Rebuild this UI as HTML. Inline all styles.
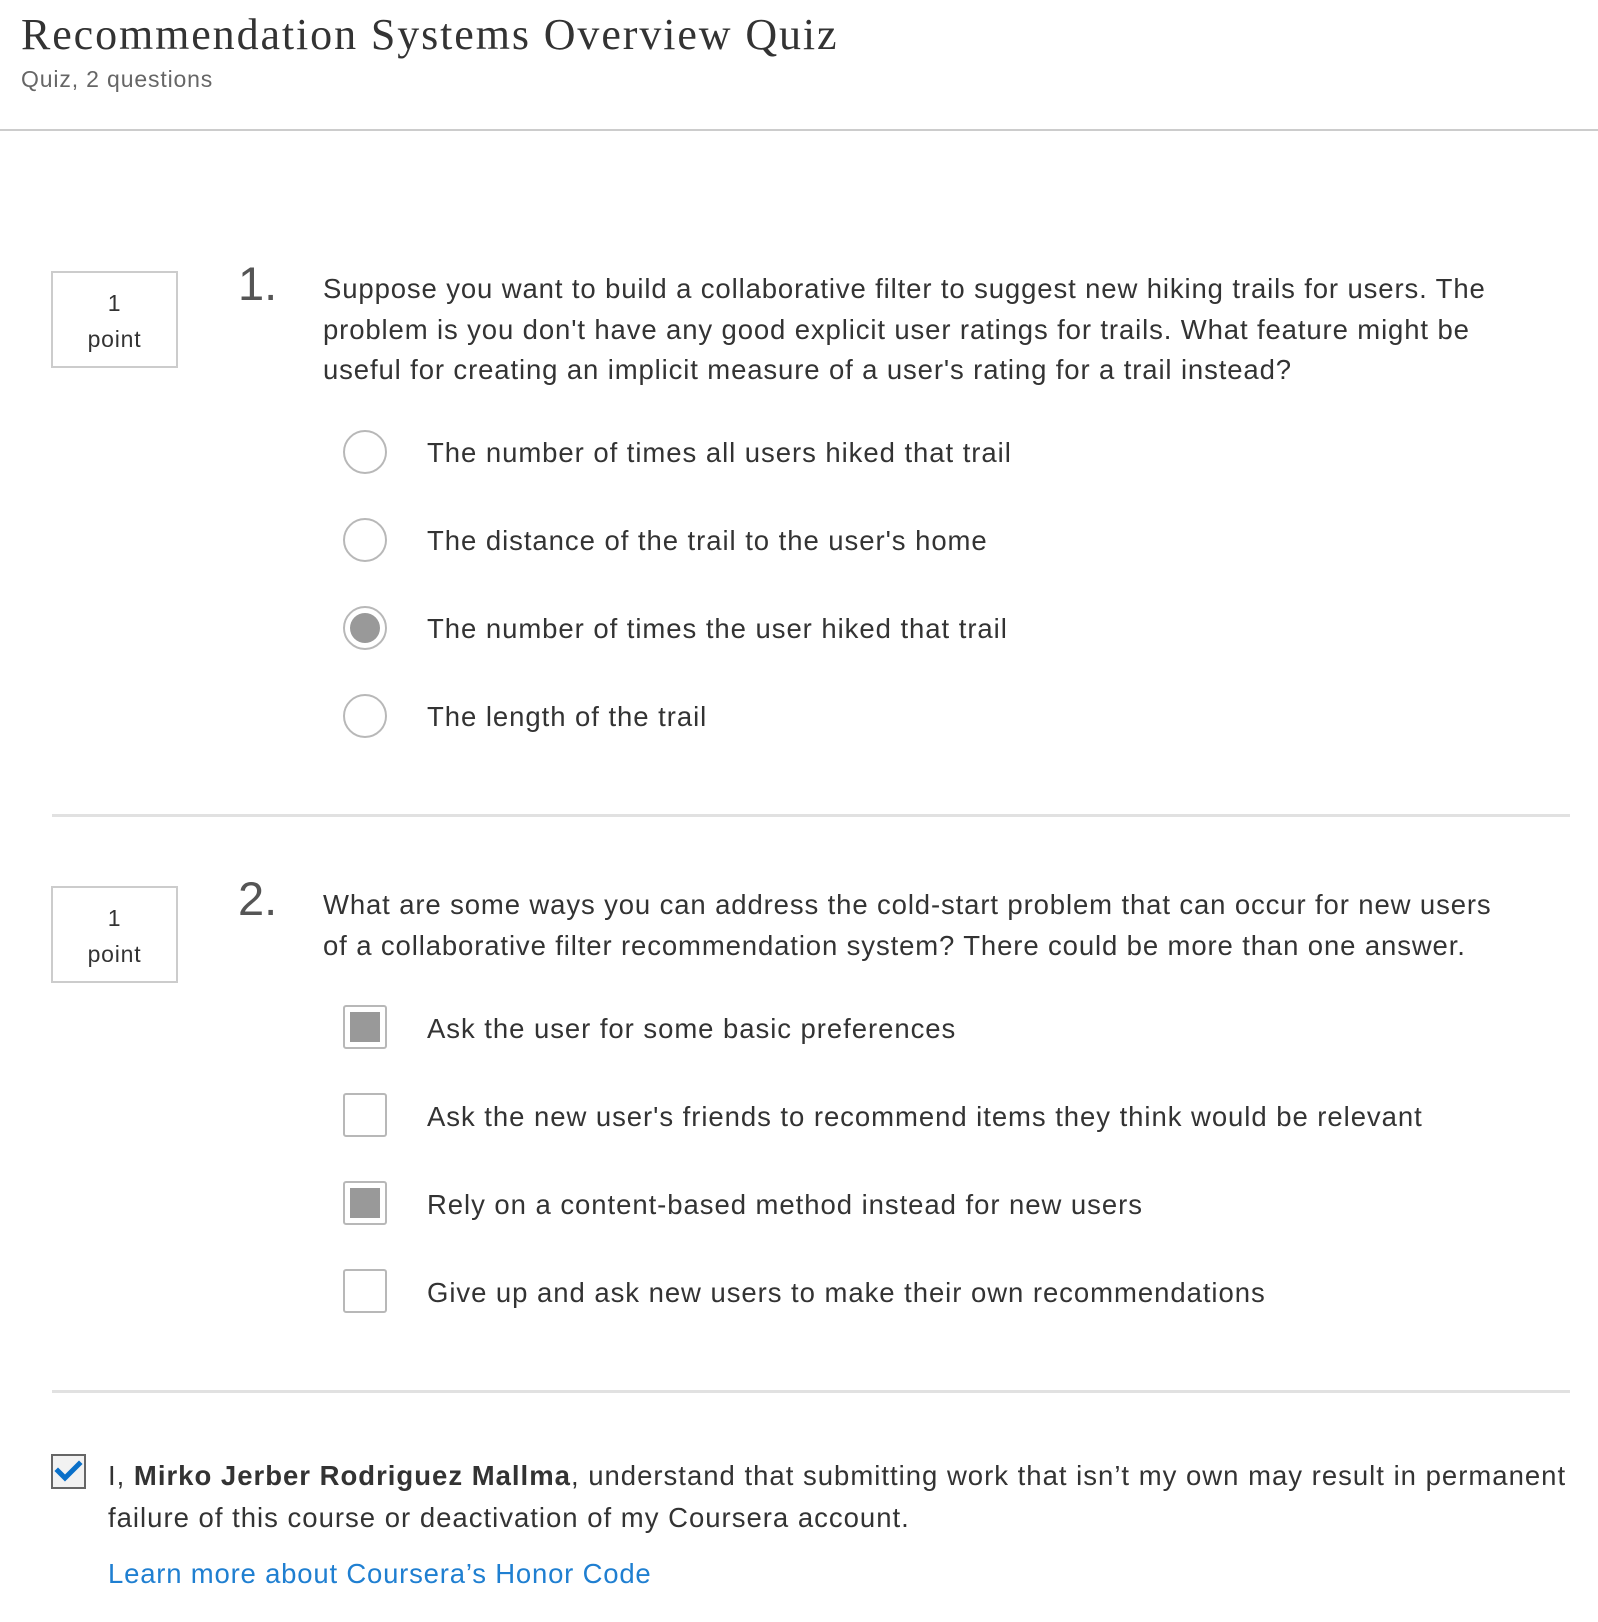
<!DOCTYPE html>
<html><head><meta charset="utf-8"><style>
body{margin:0;background:#fff;width:1598px;height:1622px;overflow:hidden;position:relative;font-family:"Liberation Sans",sans-serif;color:#333}
.a{position:absolute;white-space:nowrap}
.t{font-family:"Liberation Serif",serif;font-size:44px;left:21px;top:9px;color:#333;letter-spacing:1.9px}
.s{font-size:23px;left:21px;top:66px;color:#666;letter-spacing:0.85px}
.hr{position:absolute;left:0;width:1598px;top:129px;height:2px;background:#ccc}
.dv{position:absolute;left:52px;width:1518px;height:3px;background:#e1e1e1}
.box{position:absolute;left:51px;width:127px;height:97px;border:2px solid #ccc;box-sizing:border-box;text-align:center;font-size:23px;line-height:36px;padding-top:12px;color:#333;letter-spacing:0.8px}
.n{font-size:47px;font-weight:300;color:#555}
.q{font-size:27.5px;left:323px;line-height:40.5px;letter-spacing:0.88px}
.o{font-size:27.5px;left:427px;letter-spacing:0.95px}
.r{position:absolute;left:343px;width:44px;height:44px;border-radius:50%;border:2px solid #b8b8b8;box-sizing:border-box;background:#fff}
.r.on::after{content:"";position:absolute;left:5px;top:5px;width:30px;height:30px;border-radius:50%;background:#999}
.c{position:absolute;left:343px;width:44px;height:44px;border:2px solid #b8b8b8;border-radius:3px;box-sizing:border-box;background:#fff}
.c.on::after{content:"";position:absolute;left:5px;top:5px;width:30px;height:30px;background:#999}
</style></head><body>
<div class="a t">Recommendation Systems Overview Quiz</div>
<div class="a s">Quiz, 2 questions</div>
<div class="hr"></div>

<div class="box" style="top:271px">1<br>point</div>
<div class="a n" style="left:238px;top:256px">1.</div>
<div class="a q" style="top:269px">Suppose you want to build a collaborative filter to suggest new hiking trails for users. The<br>problem is you don't have any good explicit user ratings for trails. What feature might be<br>useful for creating an implicit measure of a user's rating for a trail instead?</div>
<div class="r" style="top:430px"></div><div class="a o" style="top:437px">The number of times all users hiked that trail</div>
<div class="r" style="top:518px"></div><div class="a o" style="top:525px">The distance of the trail to the user's home</div>
<div class="r on" style="top:606px"></div><div class="a o" style="top:613px">The number of times the user hiked that trail</div>
<div class="r" style="top:694px"></div><div class="a o" style="top:701px">The length of the trail</div>
<div class="dv" style="top:814px"></div>

<div class="box" style="top:886px">1<br>point</div>
<div class="a n" style="left:238px;top:871px">2.</div>
<div class="a q" style="top:885px">What are some ways you can address the cold-start problem that can occur for new users<br>of a collaborative filter recommendation system? There could be more than one answer.</div>
<div class="c on" style="top:1005px"></div><div class="a o" style="top:1013px">Ask the user for some basic preferences</div>
<div class="c" style="top:1093px"></div><div class="a o" style="top:1101px">Ask the new user's friends to recommend items they think would be relevant</div>
<div class="c on" style="top:1181px"></div><div class="a o" style="top:1189px">Rely on a content-based method instead for new users</div>
<div class="c" style="top:1269px"></div><div class="a o" style="top:1277px">Give up and ask new users to make their own recommendations</div>
<div class="dv" style="top:1390px"></div>

<div style="position:absolute;left:51px;top:1454px;width:35px;height:35px;border:2px solid #666;box-sizing:border-box;background:#f2f2f2">
<svg width="31" height="31" viewBox="0 0 31 31" style="position:absolute;left:0;top:0"><path d="M5 15 L12 22 L26 8" stroke="#0a70c9" stroke-width="5" fill="none" stroke-linecap="square"/></svg></div>
<div class="a" style="left:108px;top:1455px;font-size:27.5px;line-height:42px;letter-spacing:1.0px">I, <b>Mirko Jerber Rodriguez Mallma</b>, understand that submitting work that isn’t my own may result in permanent<br>failure of this course or deactivation of my Coursera account.</div>
<div class="a" style="left:108px;top:1558px;font-size:27.5px;color:#1f7fd1;letter-spacing:0.8px">Learn more about Coursera’s Honor Code</div>
</body></html>
